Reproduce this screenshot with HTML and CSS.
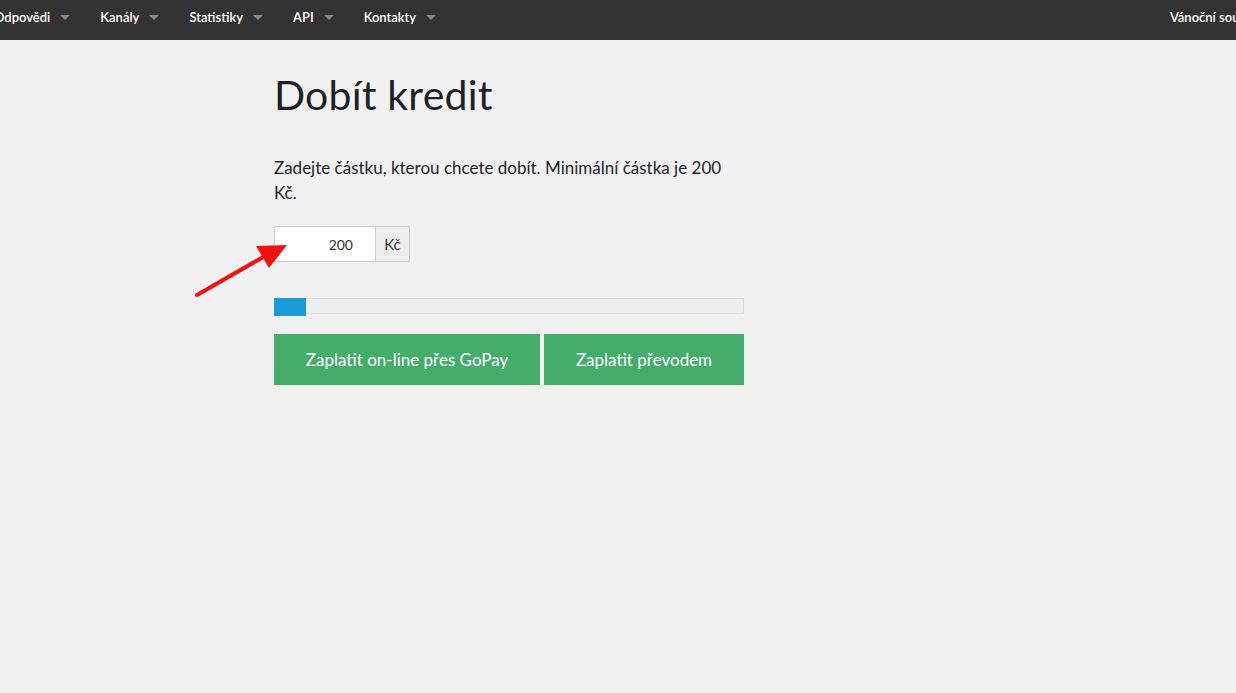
FILE: index.html
```html
<!DOCTYPE html>
<html lang="cs">
<head>
    <meta charset="UTF-8">
    <meta name="viewport" content="width=device-width, initial-scale=1.0">
    <title>Dobít kredit</title>
    <link rel="stylesheet" href="styles.css">
</head>
<body>
    <nav class="topbar">
        <ul class="menu">
            <li>Odpovědi <span class="caret"></span></li>
            <li>Kanály <span class="caret"></span></li>
            <li>Statistiky <span class="caret"></span></li>
            <li>API <span class="caret"></span></li>
            <li>Kontakty <span class="caret"></span></li>
        </ul>
        <div class="promo">Vánoční soutěž</div>
    </nav>

    <div class="container">
        <h1>Dobít kredit</h1>
        <p class="intro">Zadejte částku, kterou chcete dobít. Minimální částka je 200 Kč.</p>

        <div class="amount">
            <input type="text" value="200">
            <span class="addon">Kč</span>
            <svg class="arrow" width="110" height="70" viewBox="0 0 110 70">
                <line x1="12" y1="62" x2="80" y2="23" stroke="#f01010" stroke-width="4" stroke-linecap="round"/>
                <polygon points="102,12 71,13 84,35" fill="#f01010"/>
            </svg>
        </div>

        <div class="progress"><div class="progress-fill" style="width: 32px"></div></div>

        <div class="actions">
            <button class="btn btn-gopay">Zaplatit on-line přes GoPay</button>
            <button class="btn btn-transfer">Zaplatit převodem</button>
        </div>
    </div>
</body>
</html>
```

FILE: styles.css
```css
body {
    font-family: Lato, "Open Sans", sans-serif;
    background-color: #f1f1f1;
    margin: 0;
    color: #1f1f2a;
    overflow: hidden;
}
.topbar {
    background: #333333;
    height: 40px;
    box-sizing: border-box;
    padding-bottom: 6px;
    display: flex;
    justify-content: space-between;
    align-items: center;
    overflow: hidden;
}
.menu {
    list-style: none;
    margin: 0 0 0 -6px;
    padding: 0;
    display: flex;
    gap: 30px;
}
.menu li {
    color: #fff;
    font-size: 13px;
    font-weight: 600;
    display: flex;
    align-items: center;
    gap: 10px;
}
.caret {
    width: 0;
    height: 0;
    border-left: 5px solid transparent;
    border-right: 5px solid transparent;
    border-top: 5px solid #888;
    margin-top: 1px;
}
.promo {
    color: #fff;
    font-size: 13px;
    font-weight: 600;
    white-space: nowrap;
    margin-right: -21px;
}
.container {
    width: 470px;
    margin-left: 274px;
}
h1 {
    font-size: 41px;
    font-weight: 400;
    margin: 31px 0 0;
    line-height: 48px;
    letter-spacing: 0.2px;
}
.intro {
    font-size: 17px;
    line-height: 25px;
    margin: 36px 0 0;
}
.amount {
    position: relative;
    display: flex;
    margin-top: 21px;
    height: 36px;
}
.amount input {
    width: 101px;
    box-sizing: border-box;
    border: 1px solid #cccccc;
    border-right: none;
    background: #fff;
    text-align: right;
    padding: 0 22px 0 10px;
    font-family: inherit;
    font-size: 14px;
    color: #333;
    outline: none;
}
.addon {
    width: 35px;
    box-sizing: border-box;
    border: 1px solid #cccccc;
    background: #eeeeee;
    display: flex;
    align-items: center;
    justify-content: center;
    font-size: 15px;
    color: #333;
}
.arrow {
    position: absolute;
    left: -89px;
    top: 7px;
}
.progress {
    margin-top: 36px;
    height: 16px;
    border: 1px solid #dddddd;
    box-sizing: border-box;
    background: #eeeeee;
}
.progress-fill {
    height: 18px;
    margin-top: -1px;
    margin-left: -1px;
    background: #1b9bd7;
}
.actions {
    display: flex;
    gap: 4px;
    margin-top: 20px;
}
.btn {
    border: none;
    height: 51px;
    background: #44ad6b;
    color: #fff;
    font-family: inherit;
    font-size: 17px;
    font-weight: 400;
    cursor: pointer;
}
.btn-gopay {
    width: 266px;
}
.btn-transfer {
    width: 200px;
}
```
